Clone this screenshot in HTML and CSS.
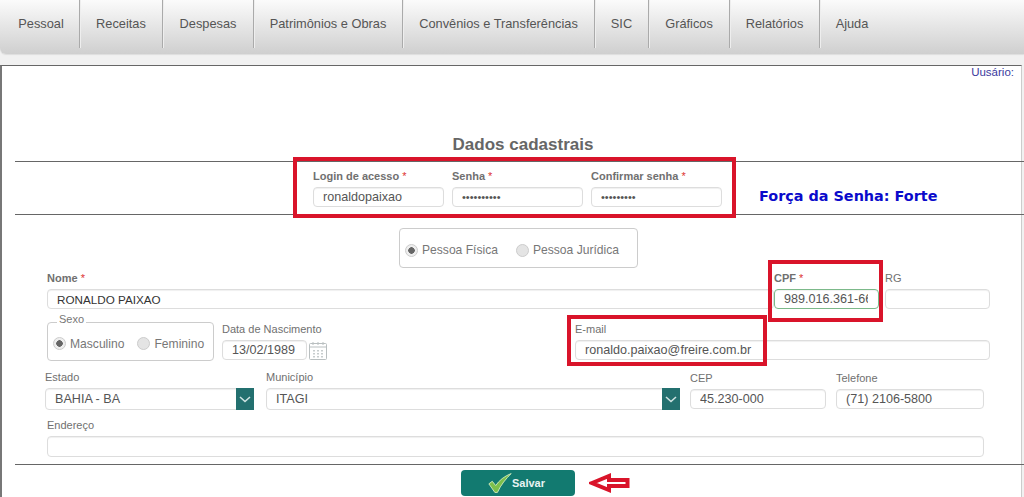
FILE: index.html
```html
<!DOCTYPE html>
<html lang="pt-BR">
<head>
<meta charset="UTF-8" />
<title>Dados cadastrais</title>
<link rel="stylesheet" href="styles.css">
</head>
<body>

<nav class="menu">
  <a>Pessoal</a>
  <a>Receitas</a>
  <a>Despesas</a>
  <a>Patrimônios e Obras</a>
  <a>Convênios e Transferências</a>
  <a>SIC</a>
  <a>Gráficos</a>
  <a>Relatórios</a>
  <a class="last">Ajuda</a>
</nav>

<main class="panel">
  <div class="usuario">Uusário:</div>
  <h2 class="titulo">Dados cadastrais</h2>
  <hr class="rule" />

  <div class="row row-login">
    <div class="field w-login">
      <label class="strong">Login de acesso <i>*</i></label>
      <input type="text" value="ronaldopaixao" />
    </div>
    <div class="field w-login">
      <label class="strong">Senha <i>*</i></label>
      <input type="password" value="1234567890" />
    </div>
    <div class="field w-login">
      <label class="strong">Confirmar senha <i>*</i></label>
      <input type="password" value="123456789" />
    </div>
    <div class="forca">Força da Senha: Forte</div>
  </div>
  <hr class="rule" />

  <div class="tipo">
    <span class="opt"><input type="radio" name="tipo" checked /> Pessoa Física</span>
    <span class="opt"><input type="radio" name="tipo" /> Pessoa Jurídica</span>
  </div>

  <div class="row row-nome">
    <div class="field w-nome">
      <label class="strong">Nome <i>*</i></label>
      <input type="text" value="RONALDO PAIXAO" class="dark" />
    </div>
    <div class="field w-cpf">
      <label class="strong">CPF <i>*</i></label>
      <input type="text" value="989.016.361-66" class="valid" />
    </div>
    <div class="field w-rg">
      <label>RG</label>
      <input type="text" />
    </div>
  </div>

  <div class="row row-sexo">
    <div class="sexo">
      <span class="legenda">Sexo</span>
      <span class="opt"><input type="radio" name="sexo" checked /> Masculino</span>
      <span class="opt"><input type="radio" name="sexo" /> Feminino</span>
    </div>
    <div class="field w-data">
      <label>Data de Nascimento</label>
      <div class="data">
        <input type="text" value="13/02/1989" />
        <svg width="18" height="19" viewBox="0 0 18 19" fill="none" stroke="#b9bfc0">
          <rect x="0.5" y="2.5" width="17" height="16" rx="1" />
          <path d="M0.5 6h17M4 1v3M9 1v3M14 1v3" />
          <path d="M5 9v1.5M9 9v1.5M13 9v1.5M5 12v1.5M9 12v1.5M13 12v1.5M5 15v1.5M9 15v1.5M13 15v1.5" stroke="#8f9a9c" />
        </svg>
      </div>
    </div>
    <div class="field w-email">
      <label>E-mail</label>
      <input type="text" value="ronaldo.paixao@freire.com.br" />
    </div>
  </div>

  <div class="row row-local">
    <div class="field w-estado">
      <label>Estado</label>
      <div class="select">
        <span>BAHIA - BA</span>
        <b class="seta"><svg width="12" height="7" viewBox="0 0 12 7" fill="none" stroke="#cfe3e2" stroke-width="1.6"><path d="M1 1l5 4.5L11 1" /></svg></b>
      </div>
    </div>
    <div class="field w-municipio">
      <label>Município</label>
      <div class="select">
        <span>ITAGI</span>
        <b class="seta"><svg width="12" height="7" viewBox="0 0 12 7" fill="none" stroke="#cfe3e2" stroke-width="1.6"><path d="M1 1l5 4.5L11 1" /></svg></b>
      </div>
    </div>
    <div class="field low w-cep">
      <label>CEP</label>
      <input type="text" value="45.230-000" />
    </div>
    <div class="field low w-tel">
      <label>Telefone</label>
      <input type="text" value="(71) 2106-5800" />
    </div>
  </div>

  <div class="row row-end">
    <div class="field w-end">
      <label>Endereço</label>
      <input type="text" class="tall" />
    </div>
  </div>
  <hr class="rule" />

  <div class="acoes">
    <button class="salvar">
      <svg width="24" height="22" viewBox="0 0 28 24">
        <path d="M1 13l4-3 4 5C13 9 19 4 27 1c-6 6-12 13-16 22h-3z" fill="#7cc04b" stroke="#d8efc4" stroke-width="1" />
      </svg>
      Salvar
    </button>
    <svg class="seta-vermelha" width="41" height="20" viewBox="0 0 41 20" fill="#fff" stroke="#d9142a" stroke-width="4">
      <path d="M3 10L20 3v4h18.500v6H20v4z" />
    </svg>
  </div>
</main>

<div class="marca m-login"></div>
<div class="marca m-email"></div>
<div class="marca m-cpf"></div>

</body>
</html>
```

FILE: styles.css
```css
* {
  box-sizing: border-box;
}
html, body {
  height: 497px;
  overflow: hidden;
}
body {
  margin: 0;
  background: #f1f1f1;
  font-family: "Liberation Sans", Arial, sans-serif;
  color: #666;
  position: relative;
}

/* menu */
.menu {
  display: flex;
  height: 54px;
  margin-bottom: 11px;
  padding-bottom: 6px;
  background: linear-gradient(to bottom, #fbfbfb, #cfcfcf);
  border-radius: 0 0 0 6px;
  box-shadow: 0 1px 1px #ddd;
}
.menu a {
  display: flex;
  align-items: center;
  justify-content: center;
  padding-bottom: 2px;
  font-size: 12.8px;
  color: #555;
  border-right: 1px solid #aaa;
  box-shadow: 1px 0 0 #eee;
}
.menu a:nth-child(1) { width: 80px; padding-left: 3px; }
.menu a:nth-child(2) { width: 83px; }
.menu a:nth-child(3) { width: 91px; }
.menu a:nth-child(4) { width: 149px; }
.menu a:nth-child(5) { width: 192px; }
.menu a:nth-child(6) { width: 54px; }
.menu a:nth-child(7) { width: 81px; }
.menu a:nth-child(8) { width: 90px; }
.menu a.last {
  width: 64px;
  border: 0;
  box-shadow: none;
}

/* painel */
.panel {
  height: 432px;
  background: #fff;
  border-top: 1px solid #666;
  border-left: 2px solid #777;
  border-right: 1px solid #ccc;
  margin-left: 0;
  margin-right: 2px;
}
.usuario {
  height: 12px;
  padding-right: 7px;
  font-size: 11.5px;
  line-height: 12px;
  text-align: right;
  color: #3a3a9e;
}
.titulo {
  margin: 52px 0 1px;
  height: 30px;
  padding-left: 23px;
  font-size: 17px;
  line-height: 30px;
  text-align: center;
  color: #666;
}
.rule {
  height: 1px;
  margin: 0 -3px 0 13px;
  border: 0;
  background: #666;
}

/* linhas do form */
.row {
  display: flex;
}
.row-login {
  height: 52px;
  padding: 7px 0 0 311px;
  gap: 8px;
}
.row-nome {
  margin-top: 3px;
  padding-left: 45px;
}
.row-sexo {
  margin-top: 13px;
  padding-left: 45px;
}
.row-local {
  margin-top: 9px;
  padding-left: 43px;
}
.row-end {
  margin-top: 8px;
  margin-bottom: 7px;
  padding-left: 45px;
}

.field label {
  display: block;
  height: 18px;
  font-size: 11px;
  line-height: 14px;
  color: #707070;
  white-space: nowrap;
}
.field label.strong {
  font-weight: bold;
}
.field label i {
  font-style: normal;
  font-weight: normal;
  color: #d33;
}
.field.low {
  padding-top: 2px;
}
.field.low label {
  height: 17px;
  line-height: 12px;
}
.field input {
  display: block;
  width: 100%;
}

input[type="text"], input[type="password"] {
  height: 20px;
  padding: 0 10px 0 9px;
  font-family: "Liberation Sans", Arial, sans-serif;
  font-size: 12.6px;
  color: #555;
  background: #fff;
  border: 1px solid #ddd;
  border-radius: 4px;
  box-shadow: inset 0 1px 1px #f0f0f0;
  outline: none;
}
input[type="password"] {
  font-size: 11px;
}
input.dark {
  font-size: 11.7px;
  color: #333;
}
input.valid {
  border-color: #7cb98a;
}
input.tall {
  height: 21px;
}

.w-login { width: 131px; }
.w-nome { width: 727px; }
.w-cpf { width: 105px; margin-right: 6px; }
.w-rg { width: 105px; }
.w-data { width: 353px; margin-left: 8px; }
.w-email { width: 415px; }
.w-estado { width: 209px; margin-right: 12px; }
.w-municipio { width: 414px; margin-right: 10px; }
.w-cep { width: 136px; margin-right: 10px; }
.w-tel { width: 148px; }
.w-end { width: 937px; }

.forca {
  margin: 20px 0 0 29px;
  font-family: "DejaVu Sans", Verdana, sans-serif;
  font-size: 14.4px;
  font-weight: bold;
  line-height: 14px;
  color: #0a0acb;
  white-space: nowrap;
}

/* radios */
.opt {
  display: inline-flex;
  align-items: center;
  gap: 4px;
  font-size: 12.1px;
  color: #777;
  white-space: nowrap;
}
input[type="radio"] {
  appearance: none;
  width: 13px;
  height: 13px;
  margin: 0;
  border: 1px solid #ccc;
  border-radius: 50%;
  background: #e4e4e4;
}
input[type="radio"]:checked {
  background: radial-gradient(circle, #666 0 3px, #eee 3.5px);
}
.tipo {
  display: flex;
  align-items: center;
  gap: 18px;
  width: 239px;
  height: 40px;
  margin: 13px 0 0 397px;
  padding: 4px 0 0 5px;
  border: 1px solid #ccc;
  border-radius: 4px;
}
.sexo {
  position: relative;
  display: flex;
  align-items: center;
  gap: 13px;
  width: 167px;
  height: 39px;
  padding: 4px 0 0 5px;
  border: 1px solid #ccc;
  border-radius: 4px;
}
.legenda {
  position: absolute;
  top: -10px;
  left: 9px;
  padding: 0 2px;
  background: #fff;
  font-size: 11px;
  line-height: 12px;
  color: #777;
}

.data {
  display: flex;
  align-items: center;
  gap: 2px;
}
.data input {
  width: 85px;
}

/* select */
.select {
  display: flex;
  align-items: center;
  justify-content: space-between;
  height: 22px;
  padding-left: 9px;
  font-size: 12.6px;
  color: #555;
  border: 1px solid #ddd;
  border-radius: 4px;
  box-shadow: inset 0 1px 1px #f0f0f0;
}
.seta {
  display: flex;
  align-items: center;
  justify-content: center;
  width: 18px;
  height: 22px;
  margin-right: -1px;
  background: #23706f;
}

/* salvar */
.acoes {
  display: flex;
  align-items: center;
  gap: 14px;
  padding: 5px 0 0 459px;
}
.salvar {
  display: flex;
  align-items: center;
  justify-content: center;
  width: 114px;
  height: 26px;
  padding: 0 3px 0 0;
  font-family: "Liberation Sans", Arial, sans-serif;
  font-size: 11px;
  font-weight: bold;
  color: #e8f3f2;
  background: #127a70;
  border: 0;
  border-radius: 4px;
}

/* marcas vermelhas por cima do print */
.marca {
  position: absolute;
  border: 4px solid #d9142a;
}
.m-login { left: 293px; top: 157px; width: 443px; height: 61px; }
.m-cpf { left: 768px; top: 260px; width: 115px; height: 62px; }
.m-email { left: 567px; top: 315px; width: 200px; height: 51px; }
```
